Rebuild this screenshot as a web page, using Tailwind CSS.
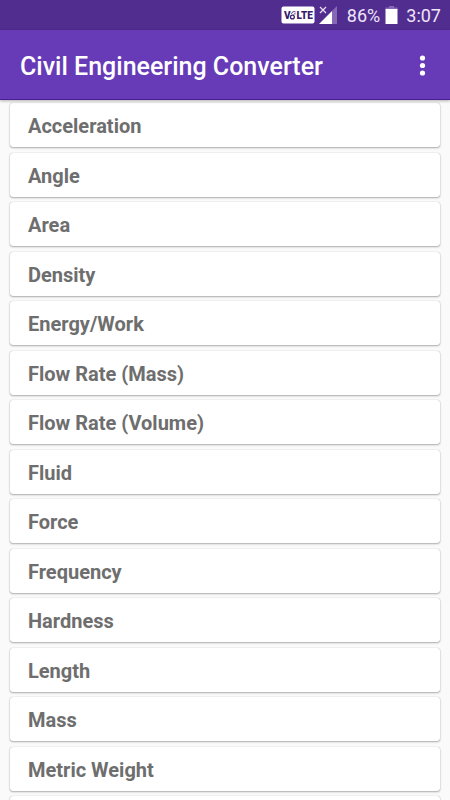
<!DOCTYPE html>
<html lang="en">
<head>
<meta charset="utf-8">
<meta name="viewport" content="width=device-width, initial-scale=1">
<title>Civil Engineering Converter</title>
<script src="https://cdn.jsdelivr.net/npm/@tailwindcss/browser@4"></script>
</head>
<body class="flex h-screen flex-col overflow-hidden bg-[#fafafa] font-[Roboto,sans-serif]">
<div class="flex h-[30px] shrink-0 items-center justify-end bg-[#512d90] pr-[9px] text-[18px] text-[#eee6f8]">
  <svg class="mr-1 h-[18px] w-[34px]" viewBox="0 0 34 18" role="img" aria-label="VoLTE">
    <rect x="0.5" y="0.5" width="33" height="17" rx="2" fill="#fff"/>
    <g fill="#37206b" font-family="Roboto, sans-serif" font-size="10" font-weight="900">
      <text x="3" y="13">V</text>
      <text x="15.500" y="13">LTE</text>
    </g>
    <g fill="none" stroke="#37206b" stroke-width="1.3">
      <circle cx="11.4" cy="11" r="1.900"/>
      <path d="M10.500 7.800C10.800 5.800 13 5 14.600 6M12.600 8.600C13 7.800 13.800 7.500 14.600 7.900" stroke-width="0.9"/>
    </g>
  </svg>
  <svg class="mr-[10px] h-[18px] w-[18px]" viewBox="0 0 18 18" role="img" aria-label="No signal">
    <path d="M18 0V18H13V5Z" fill="#8668b5"/>
    <path d="M13 5V18H0Z" fill="#fff"/>
    <path d="M1 1L7 7M7 1L1 7" stroke="#e6dcf2" stroke-width="1.3"/>
  </svg>
  <span>86%</span>
  <svg class="mr-2 ml-[5px] h-[18px] w-[13px]" viewBox="0 0 13 18" role="img" aria-label="Battery">
    <path d="M4 0H9V1.500H12.500V4H.5V1.500H4Z" fill="#8668b5"/>
    <path d="M.5 3H12.500V18H.5Z" fill="#fff"/>
  </svg>
  <span>3:07</span>
</div>
<header class="relative z-10 flex h-[70px] shrink-0 items-center justify-between border-b border-[#4a1d93] bg-[#673ab7] pr-3 pl-5 text-white shadow-[0_1px_3px_rgba(0,0,0,0.3)]">
  <h1 class="pt-1 text-[25px] font-medium">Civil Engineering Converter</h1>
  <button type="button" aria-label="More options" class="flex h-10 w-8 items-center justify-center">
    <svg class="h-6 w-6" viewBox="0 0 24 24" fill="#fff"><circle cx="12.500" cy="5" r="2.600"/><circle cx="12.500" cy="12.500" r="2.600"/><circle cx="12.500" cy="20" r="2.600"/></svg>
  </button>
</header>
<main class="min-h-0 flex-1 overflow-hidden px-[10px] pt-[3px] text-[20px] font-bold text-[#6e6e6e]">
  <ul>
    <li class="mb-1.5 flex h-11 items-center rounded-[3px] bg-white px-[18px] pt-[2px] shadow-[0_1px_2px_rgba(0,0,0,0.3),0_0_1px_rgba(0,0,0,0.3)]">Acceleration</li>
    <li class="mb-[5px] flex h-11 items-center rounded-[3px] bg-white px-[18px] pt-[2px] shadow-[0_1px_2px_rgba(0,0,0,0.3),0_0_1px_rgba(0,0,0,0.3)]">Angle</li>
    <li class="mb-1.5 flex h-11 items-center rounded-[3px] bg-white px-[18px] pt-[2px] shadow-[0_1px_2px_rgba(0,0,0,0.3),0_0_1px_rgba(0,0,0,0.3)]">Area</li>
    <li class="mb-[5px] flex h-11 items-center rounded-[3px] bg-white px-[18px] pt-[2px] shadow-[0_1px_2px_rgba(0,0,0,0.3),0_0_1px_rgba(0,0,0,0.3)]">Density</li>
    <li class="mb-1.5 flex h-11 items-center rounded-[3px] bg-white px-[18px] pt-[2px] shadow-[0_1px_2px_rgba(0,0,0,0.3),0_0_1px_rgba(0,0,0,0.3)]">Energy/Work</li>
    <li class="mb-[5px] flex h-11 items-center rounded-[3px] bg-white px-[18px] pt-[2px] shadow-[0_1px_2px_rgba(0,0,0,0.3),0_0_1px_rgba(0,0,0,0.3)]">Flow Rate (Mass)</li>
    <li class="mb-1.5 flex h-11 items-center rounded-[3px] bg-white px-[18px] pt-[2px] shadow-[0_1px_2px_rgba(0,0,0,0.3),0_0_1px_rgba(0,0,0,0.3)]">Flow Rate (Volume)</li>
    <li class="mb-[5px] flex h-11 items-center rounded-[3px] bg-white px-[18px] pt-[2px] shadow-[0_1px_2px_rgba(0,0,0,0.3),0_0_1px_rgba(0,0,0,0.3)]">Fluid</li>
    <li class="mb-1.5 flex h-11 items-center rounded-[3px] bg-white px-[18px] pt-[2px] shadow-[0_1px_2px_rgba(0,0,0,0.3),0_0_1px_rgba(0,0,0,0.3)]">Force</li>
    <li class="mb-[5px] flex h-11 items-center rounded-[3px] bg-white px-[18px] pt-[2px] shadow-[0_1px_2px_rgba(0,0,0,0.3),0_0_1px_rgba(0,0,0,0.3)]">Frequency</li>
    <li class="mb-1.5 flex h-11 items-center rounded-[3px] bg-white px-[18px] pt-[2px] shadow-[0_1px_2px_rgba(0,0,0,0.3),0_0_1px_rgba(0,0,0,0.3)]">Hardness</li>
    <li class="mb-[5px] flex h-11 items-center rounded-[3px] bg-white px-[18px] pt-[2px] shadow-[0_1px_2px_rgba(0,0,0,0.3),0_0_1px_rgba(0,0,0,0.3)]">Length</li>
    <li class="mb-1.5 flex h-11 items-center rounded-[3px] bg-white px-[18px] pt-[2px] shadow-[0_1px_2px_rgba(0,0,0,0.3),0_0_1px_rgba(0,0,0,0.3)]">Mass</li>
    <li class="mb-[5px] flex h-11 items-center rounded-[3px] bg-white px-[18px] pt-[2px] shadow-[0_1px_2px_rgba(0,0,0,0.3),0_0_1px_rgba(0,0,0,0.3)]">Metric Weight</li>
    <li class="h-11 rounded-[3px] bg-white shadow-[0_1px_2px_rgba(0,0,0,0.3),0_0_1px_rgba(0,0,0,0.3)]"></li>
  </ul>
</main>
</body>
</html>
